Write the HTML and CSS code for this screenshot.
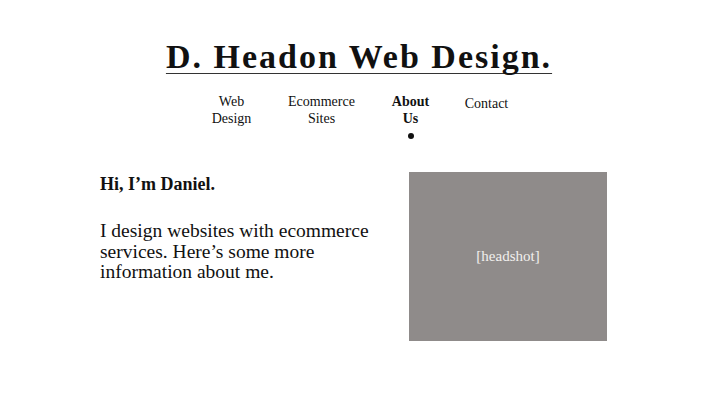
FILE: index.html
```html
<!DOCTYPE html>
<html>
<head>
<meta charset="utf-8">
<link rel="stylesheet" href="styles.css">
</head>
<body>
<header class="site-header">
  <h1 class="site-title">D. Headon Web Design.</h1>
  <nav class="nav">
    <a class="nav-item nav-web">Web<br>Design</a>
    <a class="nav-item nav-ecom">Ecommerce<br>Sites</a>
    <a class="nav-item nav-about active">About<br>Us<span class="dot"></span></a>
    <a class="nav-item nav-contact">Contact</a>
  </nav>
</header>
<main class="content">
  <section class="intro">
    <h2 class="greeting">Hi, I’m Daniel.</h2>
    <p class="bio">I design websites with ecommerce services. Here’s some more information about me.</p>
  </section>
  <div class="headshot">[headshot]</div>
</main>
</body>
</html>
```

FILE: styles.css
```css
html, body {
  margin: 0;
  padding: 0;
  background: #ffffff;
}
body {
  width: 720px;
  height: 405px;
  font-family: "Liberation Serif", "Times New Roman", serif;
  color: #111;
  overflow: hidden;
}
.site-header {
  display: flex;
  flex-direction: column;
  align-items: center;
  padding-top: 38px;
}
.site-title {
  margin: 0;
  font-size: 34px;
  font-weight: bold;
  letter-spacing: 2px;
  line-height: 38px;
  margin-left: -2px;
  text-decoration: underline;
  text-decoration-thickness: 1px;
  text-underline-offset: 5px;
  text-decoration-skip-ink: none;
  text-decoration-color: #333;
}
.nav {
  display: flex;
  margin-top: 17px;
  margin-left: -15px;
}
.nav-item {
  display: flex;
  flex-direction: column;
  align-items: center;
  text-align: center;
  font-size: 14px;
  line-height: 17px;
  color: #111;
  text-decoration: none;
}
.nav-web { width: 90px; }
.nav-ecom { width: 90px; }
.nav-about { width: 88px; font-weight: bold; }
.nav-contact { width: 64px; margin-top: 2px; }
.dot {
  display: block;
  width: 6px;
  height: 6px;
  border-radius: 50%;
  background: #111;
  margin-top: 6px;
}
.content {
  display: flex;
  padding-left: 100px;
  margin-top: 33px;
}
.intro {
  width: 309px;
}
.greeting {
  margin: 0;
  margin-top: 2px;
  font-size: 18px;
  font-weight: bold;
  line-height: 20px;
}
.bio {
  margin: 27px 0 0;
  font-size: 19.5px;
  line-height: 20.5px;
  width: 285px;
}
.headshot {
  width: 198px;
  height: 169px;
  background: #8f8b8a;
  color: #f2f0ee;
  font-size: 15px;
  display: flex;
  align-items: center;
  justify-content: center;
}
```
